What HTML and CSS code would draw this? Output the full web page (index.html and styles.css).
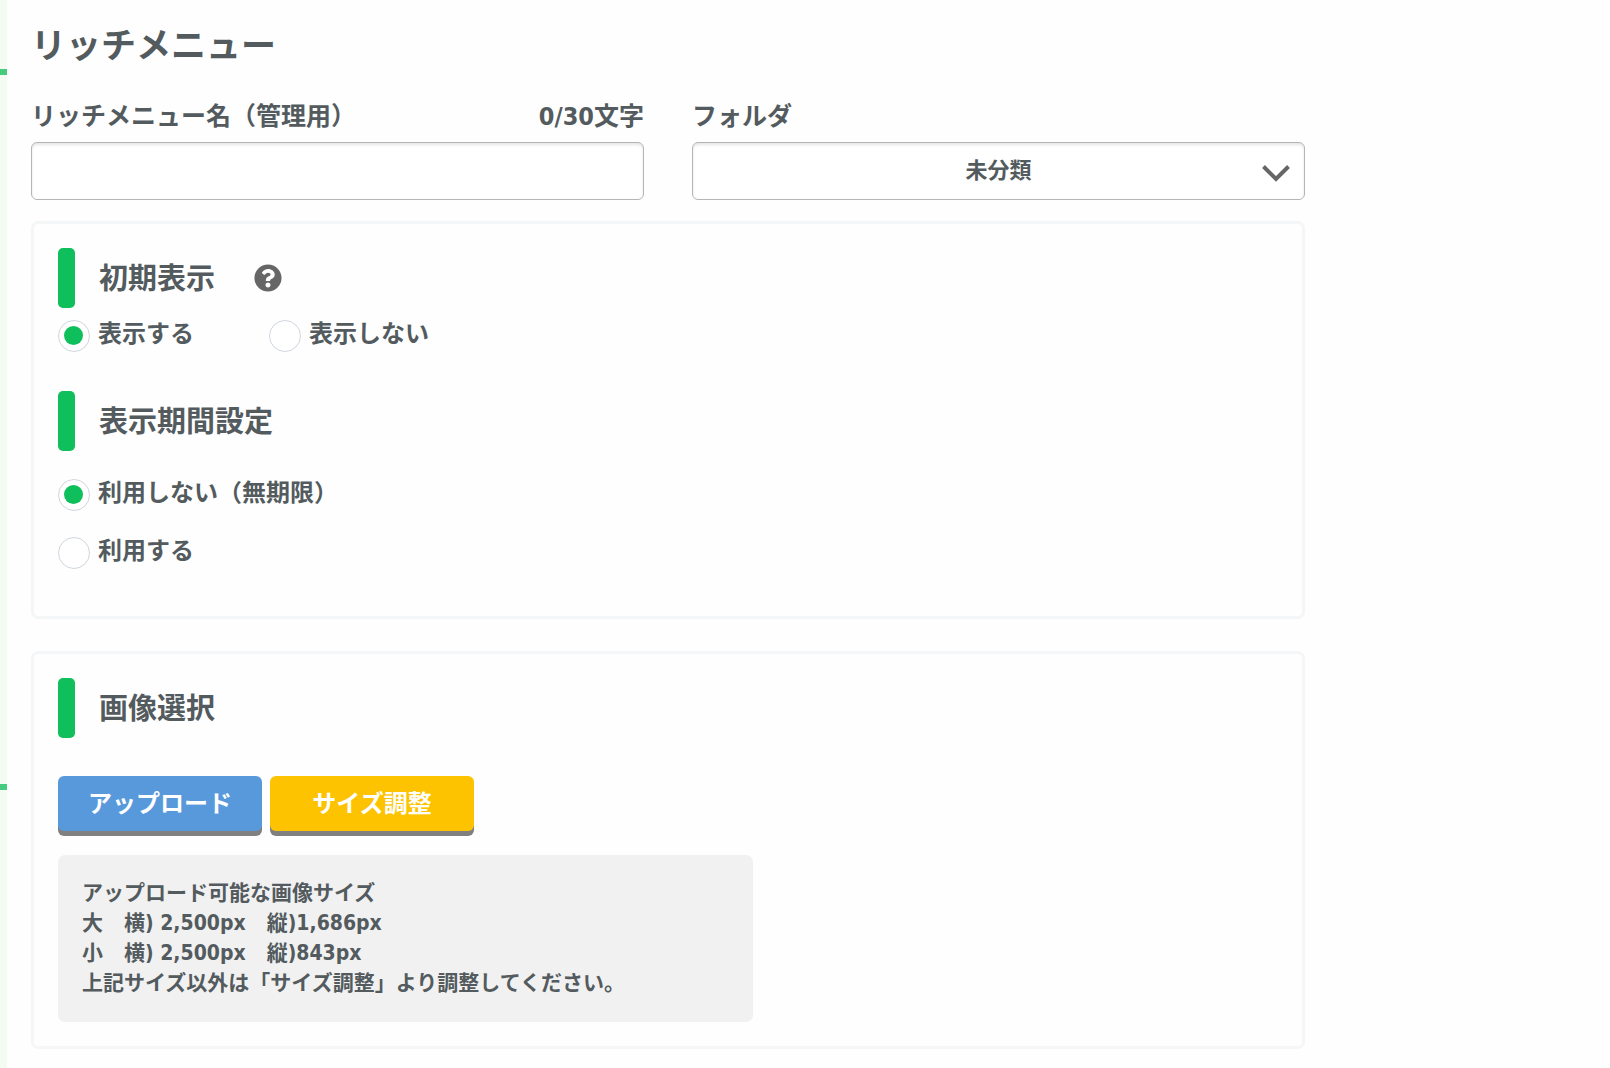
FILE: index.html
```html
<!DOCTYPE html>
<html lang="ja">
<head>
<meta charset="utf-8">
<meta name="viewport" content="width=device-width, initial-scale=1">
<title>リッチメニュー</title>
<link rel="stylesheet" href="styles.css">
</head>
<body>
<div class="layout">
  <aside class="rail">
    <div class="rail-section rail-section-top"></div>
    <div class="rail-section rail-section-main"></div>
  </aside>
  <main class="content">
    <h1 class="page-title">リッチメニュー</h1>
    <form>
      <div class="fields">
        <div class="field">
          <div class="field-head">
            <label for="menu-name">リッチメニュー名（管理用）</label>
            <span class="counter">0/30文字</span>
          </div>
          <input class="control" type="text" id="menu-name" maxlength="30">
        </div>
        <div class="field">
          <div class="field-head">
            <label for="folder">フォルダ</label>
          </div>
          <div class="select">
            <select class="control" id="folder">
              <option>未分類</option>
            </select>
            <svg class="chevron" viewBox="0 0 28 18" aria-hidden="true"><path d="M1.500 2.500l12.500 12.500 12.500-12.500" fill="none" stroke="#666" stroke-width="4"/></svg>
          </div>
        </div>
      </div>

      <section class="panel">
        <div class="heading">
          <h2>初期表示</h2>
          <svg class="help" viewBox="0 0 512 512" role="img" aria-label="ヘルプ"><path fill="#666" d="M504 256c0 136.997-111.043 248-248 248S8 392.997 8 256C8 119.083 119.043 8 256 8s248 111.083 248 248zM262.655 90c-54.497 0-89.255 22.957-116.549 63.758-3.536 5.286-2.353 12.415 2.715 16.258l34.699 26.310c5.205 3.947 12.621 3.008 16.665-2.122 17.864-22.658 30.113-35.797 57.303-35.797 20.429 0 45.698 13.148 45.698 32.958 0 14.976-12.363 22.667-32.534 33.976C247.128 238.528 216 254.941 216 296v4c0 6.627 5.373 12 12 12h56c6.627 0 12-5.373 12-12v-1.333c0-28.462 83.186-29.647 83.186-106.667 0-58.002-60.165-102-116.531-102zM256 338c-25.365 0-46 20.635-46 46 0 25.364 20.635 46 46 46s46-20.636 46-46c0-25.365-20.635-46-46-46z"/></svg>
        </div>
        <div class="radios radios-row">
          <label class="radio"><input type="radio" name="initial" checked><span>表示する</span></label>
          <label class="radio"><input type="radio" name="initial"><span>表示しない</span></label>
        </div>
        <div class="heading">
          <h2>表示期間設定</h2>
        </div>
        <div class="radios radios-column">
          <label class="radio"><input type="radio" name="period" checked><span>利用しない（無期限）</span></label>
          <label class="radio"><input type="radio" name="period"><span>利用する</span></label>
        </div>
      </section>

      <section class="panel">
        <div class="heading">
          <h2>画像選択</h2>
        </div>
        <div class="buttons">
          <button type="button" class="button button-upload">アップロード</button>
          <button type="button" class="button button-resize">サイズ調整</button>
        </div>
        <p class="note">アップロード可能な画像サイズ<br>大　横) 2,500px　縦)1,686px<br>小　横) 2,500px　縦)843px<br>上記サイズ以外は「サイズ調整」より調整してください。</p>
      </section>
    </form>
  </main>
</div>
</body>
</html>
```
FILE: styles.css
```css
* {
  box-sizing: border-box;
}

body {
  margin: 0;
  background: #fefefe;
  color: #535b5e;
  font-family: "DejaVu Sans Condensed", "Noto Sans CJK JP", sans-serif;
  font-weight: 700;
}

h1,
h2,
p {
  margin: 0;
}

.layout {
  display: flex;
  min-height: 100vh;
}

.rail {
  flex: 0 0 7px;
  background: #f3fbf3;
}

.rail-section {
  border-bottom: 6px solid #46cb7e;
}

.rail-section-top {
  height: 75px;
}

.rail-section-main {
  height: 715px;
}

.content {
  flex: 1;
  min-width: 0;
  padding: 22px 305px 19px 24px;
}

.page-title {
  font-size: 35px;
  line-height: 48px;
}

.fields {
  display: grid;
  grid-template-columns: 1fr 1fr;
  gap: 48px;
  margin-top: 31px;
}

.field-head {
  display: flex;
  justify-content: space-between;
  margin-bottom: 9px;
  font-size: 25px;
  line-height: 32px;
}

.control {
  display: block;
  width: 100%;
  height: 58px;
  padding: 0 16px;
  border: 1px solid #b5b5b5;
  border-radius: 6px;
  background: #fff;
  box-shadow: inset 0 2px 3px rgba(0, 0, 0, 0.1);
  color: inherit;
  font: inherit;
  font-size: 22px;
}

.select {
  display: grid;
  align-items: center;
}

.select .control {
  grid-area: 1 / 1;
  padding-bottom: 2px;
  appearance: none;
  text-align: center;
  text-align-last: center;
}

.chevron {
  grid-area: 1 / 1;
  justify-self: end;
  width: 28px;
  height: 18px;
  margin-right: 15px;
  margin-top: 4px;
  pointer-events: none;
}

.panel {
  margin-top: 21px;
  padding: 24px;
  border: 3px solid #f5f6f8;
  border-radius: 7px;
}

.panel + .panel {
  margin-top: 32px;
}

.heading {
  display: flex;
  align-items: center;
  height: 60px;
}

.heading::before {
  content: "";
  width: 17px;
  height: 60px;
  margin-right: 24px;
  border-radius: 5px;
  background: #0ebf5b;
}

.heading h2 {
  padding-top: 2px;
  font-size: 29px;
  line-height: 58px;
}

.help {
  width: 28px;
  height: 28px;
  margin-left: 39px;
}

.radios {
  display: flex;
}

.radios-row {
  gap: 75px;
  margin: 12px 0 39px;
}

.radios-column {
  flex-direction: column;
  align-items: flex-start;
  gap: 26px;
  margin: 28px 0 23px;
}

.radio {
  display: flex;
  gap: 8px;
  font-size: 24px;
  line-height: 28px;
}

.radio input {
  width: 32px;
  height: 32px;
  margin: 0;
  padding: 5px;
  border: 1px solid #d0d6de;
  border-radius: 50%;
  background: #fff;
  appearance: none;
}

.radio input:checked::before {
  content: "";
  display: block;
  width: 19px;
  height: 19px;
  border-radius: 50%;
  background: #0ebf5b;
}

.buttons {
  display: flex;
  gap: 8px;
  margin-top: 38px;
}

.button {
  width: 204px;
  height: 55px;
  padding: 0 0 4px;
  border: 0;
  border-radius: 6px;
  box-shadow: 0 5px #808080;
  color: #fff;
  font: inherit;
  font-size: 24px;
}

.button-upload {
  background: #5899db;
}

.button-resize {
  background: #fdc300;
}

.note {
  width: 57%;
  margin-top: 24px;
  padding: 23px 24px 24px;
  border-radius: 7px;
  background: #f1f1f1;
  font-size: 21px;
  line-height: 30px;
}
```
